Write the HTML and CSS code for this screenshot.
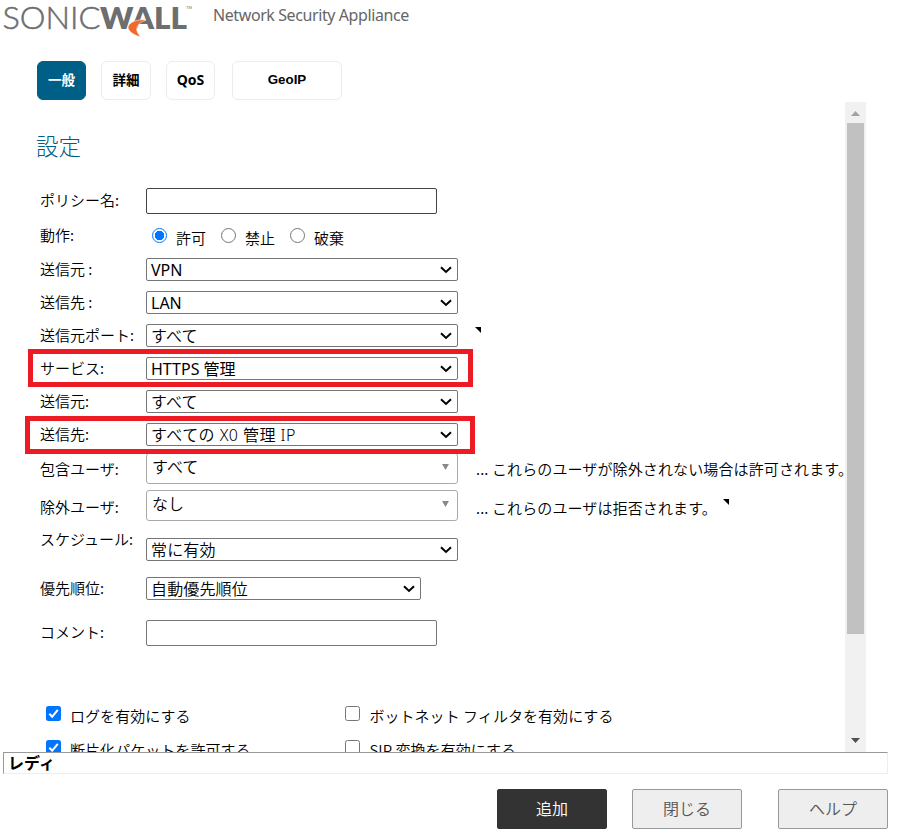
FILE: index.html
```html
<!DOCTYPE html>
<html lang="ja">
<head>
<meta charset="utf-8">
<title>Network Security Appliance</title>
<link rel="stylesheet" href="styles.css">
</head>
<body>
<header class="header">
  <svg class="logo" width="194" height="40" viewBox="0 0 194 40">
    <text class="logo-thin" x="2.500" y="28.500" textLength="98" lengthAdjust="spacingAndGlyphs">SONIC</text>
    <text class="logo-bold" x="100" y="28.500" textLength="87" lengthAdjust="spacingAndGlyphs">WALL</text>
    <path d="M146 20C136 18.500 125 24 129 30C131 33 135 35.500 141 37C136 32 133 25 146 20Z" fill="#f26a2a" stroke="#fff" stroke-width=".5"/>
    <text class="logo-tm" x="186" y="9">TM</text>
  </svg>
  <span class="product">Network Security Appliance</span>
</header>
<nav class="tabs">
  <span class="tab active">一般</span>
  <span class="tab detail">詳細</span>
  <span class="tab qos">QoS</span>
  <span class="tab geo">GeoIP</span>
</nav>
<main class="main">
  <div class="content">
    <h1 class="title">設定</h1>
    <div class="row policy"><span class="label">ポリシー名:</span><span class="input dark"></span></div>
    <div class="row action"><span class="label">動作:</span>
      <span class="radios"><i class="radio on"></i><span>許可</span><i class="radio"></i><span>禁止</span><i class="radio"></i><span>破棄</span></span></div>
    <div class="row"><span class="label">送信元 :</span><span class="select"><span class="latin">VPN</span><svg class="chev" viewBox="0 0 12 8"><path d="M1 1.300L6 6L11 1.300"/></svg></span></div>
    <div class="row"><span class="label">送信先 :</span><span class="select"><span class="latin">LAN</span><svg class="chev" viewBox="0 0 12 8"><path d="M1 1.300L6 6L11 1.300"/></svg></span></div>
    <div class="row"><span class="label">送信元ポート:</span><span class="select"><span>すべて</span><svg class="chev" viewBox="0 0 12 8"><path d="M1 1.300L6 6L11 1.300"/></svg></span><svg class="corner port" viewBox="0 0 6 6"><path d="M0 0H6V6Z"/></svg></div>
    <div class="row"><span class="label">サービス:</span><span class="select"><span class="latin">HTTPS 管理</span><svg class="chev" viewBox="0 0 12 8"><path d="M1 1.300L6 6L11 1.300"/></svg></span><i class="mark service"></i></div>
    <div class="row"><span class="label">送信元:</span><span class="select"><span>すべて</span><svg class="chev" viewBox="0 0 12 8"><path d="M1 1.300L6 6L11 1.300"/></svg></span></div>
    <div class="row"><span class="label">送信先:</span><span class="select"><span class="latin address">すべての X0 管理 IP</span><svg class="chev" viewBox="0 0 12 8"><path d="M1 1.300L6 6L11 1.300"/></svg></span><i class="mark dest"></i></div>
    <div class="row include"><span class="label">包含ユーザ:</span><span class="combo"><span>すべて</span><svg class="tri" viewBox="0 0 8 7"><path d="M0 0H8L4 7Z"/></svg></span><span class="note">... これらのユーザが除外されない場合は許可されます。</span></div>
    <div class="row exclude"><span class="label">除外ユーザ:</span><span class="combo"><span>なし</span><svg class="tri" viewBox="0 0 8 7"><path d="M0 0H8L4 7Z"/></svg></span><span class="note">... これらのユーザは拒否されます。</span><svg class="corner user" viewBox="0 0 6 6"><path d="M0 0H6V6Z"/></svg></div>
    <div class="row schedule"><span class="label">スケジュール:</span><span class="select"><span>常に有効</span><svg class="chev" viewBox="0 0 12 8"><path d="M1 1.300L6 6L11 1.300"/></svg></span></div>
    <div class="row priority"><span class="label">優先順位:</span><span class="select short"><span>自動優先順位</span><svg class="chev" viewBox="0 0 12 8"><path d="M1 1.300L6 6L11 1.300"/></svg></span></div>
    <div class="row comment"><span class="label">コメント:</span><span class="input"></span></div>
    <div class="checks">
      <div class="check"><svg class="box on" viewBox="0 0 15 15"><path d="M3.300 7.800L6.200 10.700L11.800 3.800"/></svg><span>ログを有効にする</span></div>
      <div class="check"><i class="box"></i><span>ボットネット フィルタを有効にする</span></div>
      <div class="check"><svg class="box on" viewBox="0 0 15 15"><path d="M3.300 7.800L6.200 10.700L11.800 3.800"/></svg><span>断片化パケットを許可する</span></div>
      <div class="check"><i class="box"></i><span>SIP 変換を有効にする</span></div>
    </div>
  </div>
  <div class="scrollbar">
    <svg class="arrow" viewBox="0 0 9 5"><path d="M0 5L4.500 0L9 5Z" fill="#a3a3a3"/></svg>
    <i class="thumb"></i>
    <svg class="arrow down" viewBox="0 0 9 5"><path d="M0 0H9L4.500 5Z" fill="#505050"/></svg>
  </div>
</main>
<div class="status">レディ</div>
<footer class="buttons">
  <span class="button primary">追加</span>
  <span class="button">閉じる</span>
  <span class="button help">ヘルプ</span>
</footer>
</body>
</html>
```
FILE: styles.css
```css
* { box-sizing: border-box; }
body {
  margin: 0;
  width: 897px;
  height: 836px;
  overflow: hidden;
  background: #fff;
  color: #000;
  font: 350 15px/20px "Noto Sans CJK JP", sans-serif;
  white-space: nowrap;
}
svg { display: block; flex: none; }
i { display: block; flex: none; }
.header { display: flex; height: 61px; }
.logo { margin-right: 19px; overflow: visible; }
.logo-thin { font: 300 31px Lato, sans-serif; fill: #6d6e70; stroke: #6d6e70; stroke-width: .5; }
.logo-bold { font: 800 31px Lato, sans-serif; fill: #6d6e70; }
.logo-tm { font: 4px "Liberation Sans", sans-serif; fill: #6d6e70; }
.product { padding-top: 5px; font: 16px/20px "Noto Sans", sans-serif; color: #666; letter-spacing: -.41px; }
.tabs { display: flex; height: 41px; padding-left: 37px; }
.tab {
  width: 49px;
  height: 39px;
  border: 1px solid #ececec;
  border-radius: 6px;
  font-size: 13.500px;
  font-weight: 700;
  line-height: 35px;
  text-align: center;
}
.active { background: #005f86; border-color: #005f86; color: #fff; }
.detail { width: 50px; margin-left: 15px; }
.qos { margin-left: 15px; font-family: "Noto Sans", sans-serif; font-size: 14px; line-height: 36px; }
.geo { width: 110px; margin-left: 17px; font-family: "Liberation Sans", sans-serif; font-size: 13.330px; }
.main { display: flex; height: 650px; overflow: hidden; }
.content { width: 845px; }
.title { height: 82px; margin: 0; padding: 27px 0 0 36px; font-size: 22.500px; font-weight: 300; line-height: 32px; color: #005f86; }
.row { position: relative; display: flex; align-items: center; height: 33px; padding-left: 40px; }
.label { position: relative; top: -1px; width: 106px; flex: none; }
.policy { height: 34px; }
.action { height: 35px; }
.input { width: 291px; height: 26px; border: 1px solid #777; border-radius: 2px; }
.dark { border-color: #444; }
.radios { display: flex; align-items: center; padding-left: 6px; }
.radios span { width: 45px; margin: 0 0 0 9px; padding-top: 4px; }
.radio { width: 15px; height: 15px; border: 1px solid #767676; border-radius: 50%; }
.radio.on { border: 1.500px solid #0075ff; background: radial-gradient(circle, #0075ff 4.500px, #fff 5px); }
.select {
  display: flex;
  align-items: center;
  justify-content: space-between;
  width: 312px;
  height: 23px;
  padding: 0 5px 0 4px;
  border: 1px solid #767676;
  border-radius: 2px;
  font-size: 16px;
  line-height: 19px;
}
.select > span { padding-bottom: 1px; letter-spacing: .15px; }
.select > .latin { padding: 1px 0 0; font-weight: 400; letter-spacing: 0; }
.select > .address { font-weight: 350; letter-spacing: .45px; }
.latin { font-family: "Noto Sans", "Noto Sans CJK JP", sans-serif; }
.short { width: 275px; }
.chev { width: 12px; height: 8px; }
.chev path { fill: none; stroke: #000; stroke-width: 2; }
.corner { position: absolute; width: 6px; height: 6px; }
.port { left: 475px; top: 8px; }
.user { left: 723px; top: 12px; }
.mark { position: absolute; z-index: 1; height: 38px; border: 5px solid #ed1c24; }
.service { left: 28px; top: -3px; width: 445px; }
.dest { left: 25px; top: -2px; width: 450px; }
.include { height: 36px; }
.exclude { height: 39px; }
.include .label { padding-top: 1px; }
.exclude .label, .exclude .note { padding-top: 3px; }
.combo {
  display: flex;
  justify-content: space-between;
  width: 312px;
  height: 31px;
  flex: none;
  margin-bottom: 2px;
  padding: 2px 8px 0 5px;
  border: 1px solid #aaa;
  border-radius: 3px;
  font-size: 16px;
}
.tri { width: 7px; height: 6px; margin-top: 8px; fill: #888; }
.note { margin-left: 18px; letter-spacing: .12px; }
.schedule { height: 42px; align-items: flex-start; }
.schedule .label { padding-top: 4px; }
.schedule .select { margin-top: 12px; }
.priority { height: 41px; }
.comment { height: 48px; }
.checks { display: grid; grid-template-columns: 299.400px 400px; grid-auto-rows: 34px; padding: 39px 0 0 46px; }
.check { display: flex; align-items: center; }
.check span { margin-left: 9px; padding-top: 5px; letter-spacing: .05px; }
.box { width: 15px; height: 15px; border: 1px solid #767676; border-radius: 2.500px; }
.box.on { border: 0; background: #0075ff; fill: none; stroke: #fff; stroke-width: 2; }
.scrollbar { display: flex; flex-direction: column; align-items: center; width: 21px; background: #f1f1f1; }
.arrow { width: 9px; height: 5px; margin: 9px 0 7px; }
.thumb { width: 17px; height: 511px; background: #c1c1c1; }
.arrow.down { margin: auto 0 9px; }
.status {
  width: 885px;
  height: 22px;
  margin-left: 3px;
  padding-left: 4px;
  border: 1px solid;
  border-color: #999 #eee #eee #999;
  font-size: 16px;
  line-height: 19px;
  font-weight: 700;
}
.buttons { display: flex; gap: 25px; padding: 15px 0 0 497px; }
.button { width: 110px; height: 40px; border: 1px solid #999; border-radius: 2px; background: #eee; color: #555; font-size: 16px; line-height: 37px; text-align: center; }
.primary { background: #333; border-color: #333; color: #fff; }
.help { margin-left: 11px; }
```
